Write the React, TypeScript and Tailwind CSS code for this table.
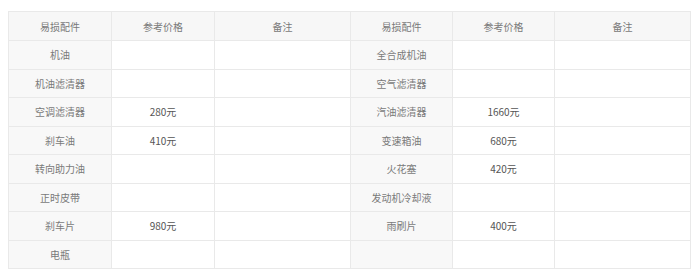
import React from 'react';

const rows: [string, string, string, string][] = [
  ['机油', '', '全合成机油', ''],
  ['机油滤清器', '', '空气滤清器', ''],
  ['空调滤清器', '280元', '汽油滤清器', '1660元'],
  ['刹车油', '410元', '变速箱油', '680元'],
  ['转向助力油', '', '火花塞', '420元'],
  ['正时皮带', '', '发动机冷却液', ''],
  ['刹车片', '980元', '雨刷片', '400元'],
  ['电瓶', '', '', ''],
];

const font = { fontFamily: '"Noto Sans CJK SC", "Noto Sans", sans-serif' };

export default function App() {
  return (
    <div className="w-[700px] h-[279px] bg-white pt-[11px] pl-[8px]" style={font}>
      <table className="border-collapse w-[682px] text-[10px] text-[#7a7a7a] table-fixed">
        <colgroup>
          <col className="w-[103px]" />
          <col className="w-[103px]" />
          <col className="w-[136px]" />
          <col className="w-[102px]" />
          <col className="w-[102px]" />
          <col className="w-[136px]" />
        </colgroup>
        <thead>
          <tr className="h-[29px] bg-[#f7f7f7]">
            {['易损配件', '参考价格', '备注', '易损配件', '参考价格', '备注'].map((h, i) => (
              <th key={i} className="border border-[#e9e9e9] font-normal text-center p-0">
                {h}
              </th>
            ))}
          </tr>
        </thead>
        <tbody>
          {rows.map((r, i) => (
            <tr key={i} className="h-[28.5px]">
              <td className="border border-[#e9e9e9] bg-[#f8f8f8] text-center p-0">{r[0]}</td>
              <td className="border border-[#e9e9e9] text-center p-0 text-[#555]">{r[1]}</td>
              <td className="border border-[#e9e9e9] p-0"></td>
              <td className="border border-[#e9e9e9] bg-[#f8f8f8] text-center p-0">{r[2]}</td>
              <td className="border border-[#e9e9e9] text-center p-0 text-[#555]">{r[3]}</td>
              <td className="border border-[#e9e9e9] p-0"></td>
            </tr>
          ))}
        </tbody>
      </table>
    </div>
  );
}
